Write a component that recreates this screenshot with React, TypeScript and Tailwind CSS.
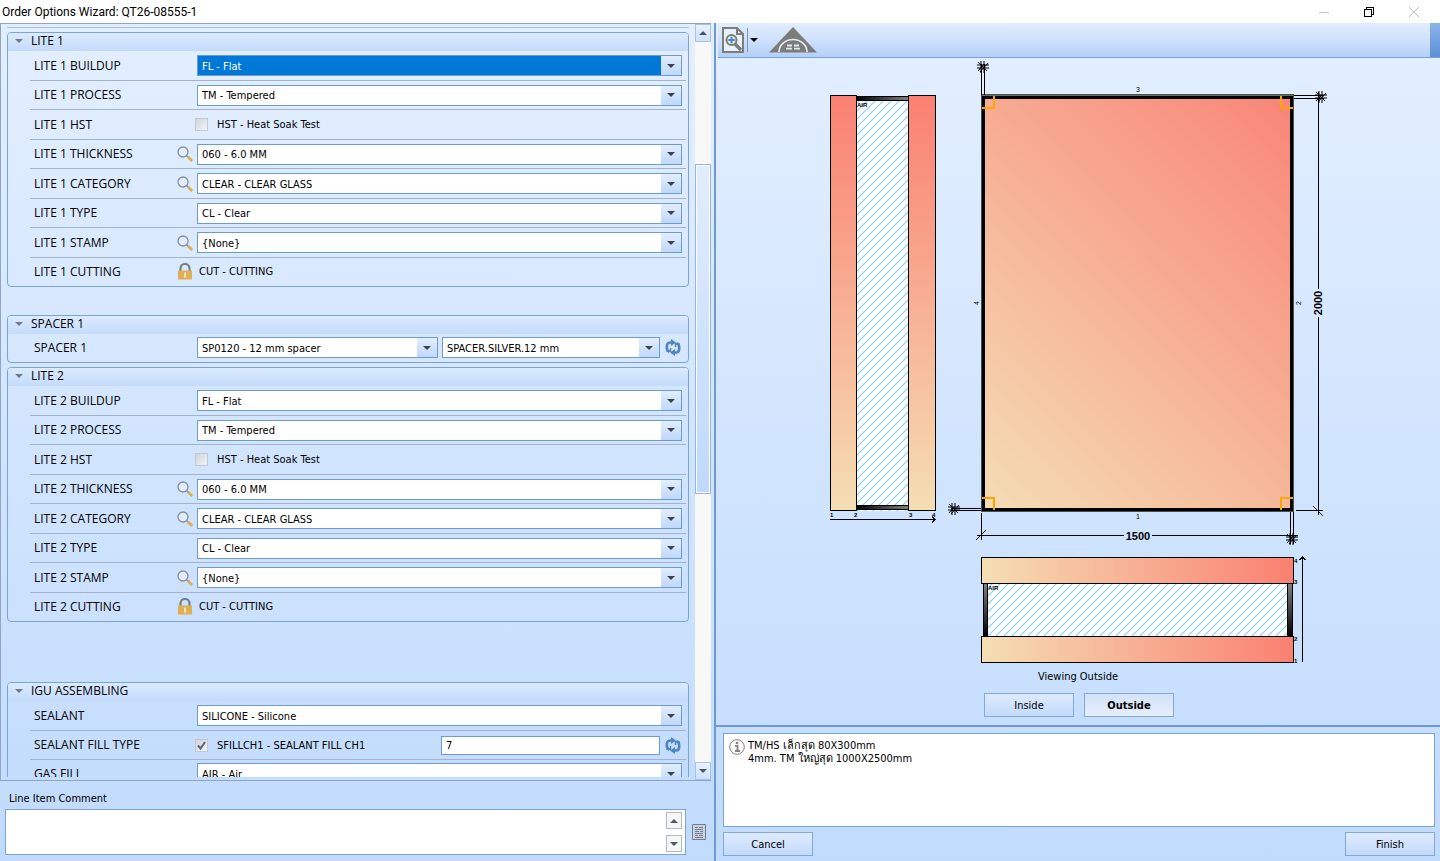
import { useState } from "react";
import type { ReactNode } from "react";

type RowKind = "select" | "check" | "locked";

interface OptionRow {
  id: string;
  label: string;
  value: string;
  kind: RowKind;
  search?: boolean;
  focused?: boolean;
  checked?: boolean;
  extra?: "select" | "input";
  extraValue?: string;
}

interface OptionGroup {
  title: string;
  gap: string;
  rows: OptionRow[];
}

function liteRows(n: number): OptionRow[] {
  return [
    { id: `lite${n}-buildup`, label: `LITE ${n} BUILDUP`, value: "FL - Flat", kind: "select", focused: n === 1 },
    { id: `lite${n}-process`, label: `LITE ${n} PROCESS`, value: "TM - Tempered", kind: "select" },
    { id: `lite${n}-hst`, label: `LITE ${n} HST`, value: "HST - Heat Soak Test", kind: "check" },
    { id: `lite${n}-thickness`, label: `LITE ${n} THICKNESS`, value: "060 - 6.0 MM", kind: "select", search: true },
    { id: `lite${n}-category`, label: `LITE ${n} CATEGORY`, value: "CLEAR - CLEAR GLASS", kind: "select", search: true },
    { id: `lite${n}-type`, label: `LITE ${n} TYPE`, value: "CL - Clear", kind: "select" },
    { id: `lite${n}-stamp`, label: `LITE ${n} STAMP`, value: "{None}", kind: "select", search: true },
    { id: `lite${n}-cutting`, label: `LITE ${n} CUTTING`, value: "CUT - CUTTING", kind: "locked" },
  ];
}

const groups: OptionGroup[] = [
  { title: "LITE 1", gap: "mt-1", rows: liteRows(1) },
  {
    title: "SPACER 1",
    gap: "mt-7",
    rows: [
      {
        id: "spacer1",
        label: "SPACER 1",
        value: "SP0120 - 12 mm spacer",
        kind: "select",
        extra: "select",
        extraValue: "SPACER.SILVER.12 mm",
      },
    ],
  },
  { title: "LITE 2", gap: "mt-1", rows: liteRows(2) },
  {
    title: "IGU ASSEMBLING",
    gap: "mt-15",
    rows: [
      { id: "sealant", label: "SEALANT", value: "SILICONE - Silicone", kind: "select" },
      {
        id: "sealant-fill",
        label: "SEALANT FILL TYPE",
        value: "SFILLCH1 - SEALANT FILL CH1",
        kind: "check",
        checked: true,
        extra: "input",
        extraValue: "7",
      },
      { id: "gas-fill", label: "GAS FILL", value: "AIR - Air", kind: "select" },
    ],
  },
];

function Triangle({ up = false, className }: { up?: boolean; className?: string }) {
  return (
    <svg width="8" height="4" viewBox="0 0 8 4" className={className} fill="currentColor" aria-hidden="true">
      <path d={up ? "M0 4h8L4 0z" : "M0 0h8L4 4z"} />
    </svg>
  );
}

function SearchIcon() {
  return (
    <svg width="16" height="16" viewBox="0 0 16 16" fill="none" aria-hidden="true">
      <circle cx="6" cy="6" r="5" fill="#e4edfb" stroke="#8490a2" strokeWidth="1.3" />
      <path d="M9.5 9.5l2 2" stroke="#8490a2" strokeWidth="1.4" />
      <path d="M11 11l4.2 4" stroke="#dfae52" strokeWidth="2.8" />
    </svg>
  );
}

function LockIcon() {
  return (
    <svg width="16" height="17" viewBox="0 0 16 17" aria-hidden="true">
      <path d="M3.5 8V5.5a4.5 4.5 0 0 1 9 0V8" fill="none" stroke="#75808a" strokeWidth="2.2" />
      <rect x="1" y="7.5" width="14" height="9" fill="#e0b056" />
      <path d="M7.3 9.5h1.7v5H7.3z" fill="#fbf0d4" />
    </svg>
  );
}

function RefreshIcon() {
  return (
    <svg width="16" height="17" viewBox="0 0 16 17" fill="none" stroke="#4f84c0" strokeWidth="2.6" aria-hidden="true">
      <path d="M7 3.5H5.2C3 3.5 1.8 5 1.8 7.5v1.3c0 1.9.8 3.3 2.700 3.900" />
      <path d="M9 13.5h1.800c2.200 0 3.400-1.500 3.400-4V8.200c0-1.900-.8-3.300-2.700-3.900" />
      <path d="M6 0l5 3.500L6 7zM10 10l-5 3.500 5 3.500z" fill="#4f84c0" stroke="none" />
      <path d="M1.500 12.200h4V9M14.500 4.800h-4V8" strokeWidth="1.500" />
    </svg>
  );
}

function Combo({ id, label, value, focused }: { id: string; label?: string; value: string; focused?: boolean }) {
  return (
    <div className="relative h-[21px] min-w-0 flex-1 border border-[#6d9bd1] bg-white">
      <select
        id={id}
        aria-label={label}
        defaultValue={value}
        className={
          focused
            ? "block h-full w-full appearance-none bg-[#0078d7] pl-1 pt-px text-white outline-none"
            : "block h-full w-full appearance-none bg-white pl-1 pt-px outline-none"
        }
      >
        <option>{value}</option>
      </select>
      <span className="pointer-events-none absolute inset-y-0 right-0 flex w-5 items-center justify-center bg-linear-to-b from-[#e3eefe] to-[#bfd8fa] text-[#3b444e]">
        <Triangle />
      </span>
    </div>
  );
}

function Check({ id, label, checked }: { id: string; label: string; checked?: boolean }) {
  const [on, setOn] = useState(Boolean(checked));
  return (
    <div className="flex flex-1 items-center">
      <span className="relative -ml-0.5 mr-[9px] size-[13px]">
        <input
          id={id}
          type="checkbox"
          checked={on}
          onChange={(e) => setOn(e.target.checked)}
          className="block size-full appearance-none border border-[#c3c9d2] bg-linear-to-br from-[#ced4dc] to-[#f4f5f7]"
        />
        {on && (
          <svg viewBox="0 0 13 13" className="pointer-events-none absolute inset-0" fill="none" stroke="#5d6572" strokeWidth="2" aria-hidden="true">
            <path d="M3 6.5l2.5 3L10 3" />
          </svg>
        )}
      </span>
      <label htmlFor={id}>{label}</label>
    </div>
  );
}

function Row({ row }: { row: OptionRow }) {
  return (
    <div className="ml-[22px] mr-0.5 flex items-center border-b border-[#a3b3cb] px-1 not-last:odd:h-[30px] not-last:even:h-[29px] last:h-7 last:border-b-transparent">
      <label htmlFor={row.id} className="w-[143px] shrink-0 font-['Open_Sans','Noto_Sans',sans-serif] text-[12px] leading-4">
        {row.label}
      </label>
      <span className="flex w-5 shrink-0">
        {row.search && <SearchIcon />}
        {row.kind === "locked" && <LockIcon />}
      </span>
      {row.kind === "locked" && (
        <output id={row.id} className="pl-0.5">
          {row.value}
        </output>
      )}
      {row.kind === "check" && <Check id={row.id} label={row.value} checked={row.checked} />}
      {row.kind === "select" && <Combo id={row.id} value={row.value} focused={row.focused} />}
      {row.extra && (
        <div className="ml-1 mr-px flex flex-1 items-center gap-[5px]">
          {row.extra === "select" ? (
            <Combo id={`${row.id}-extra`} label={`${row.label} item`} value={row.extraValue ?? ""} />
          ) : (
            <input
              aria-label={`${row.label} quantity`}
              defaultValue={row.extraValue}
              className="h-[19px] min-w-0 flex-1 border border-[#6d9bd1] bg-white px-1 outline-none"
            />
          )}
          <button type="button" aria-label="Refresh">
            <RefreshIcon />
          </button>
        </div>
      )}
    </div>
  );
}

function Group({ group }: { group: OptionGroup }) {
  return (
    <section className={`${group.gap} rounded-[4px] border border-[#7ba3d8]`}>
      <h2 className="flex h-[18px] items-center rounded-t-[3px] bg-linear-to-b from-[#dcebff] to-[#c3dbfb] pb-0.5 pl-[7px] font-['Open_Sans','Noto_Sans',sans-serif] text-[12px] leading-4">
        <Triangle className="mr-2 text-[#6f7b88]" />
        {group.title}
      </h2>
      <div>
        {group.rows.map((row) => (
          <Row key={row.id} row={row} />
        ))}
      </div>
    </section>
  );
}

function PushButton({ children, active }: { children: ReactNode; active?: boolean }) {
  return (
    <button
      type="button"
      className={
        active
          ? "h-6 w-[90px] border border-[#85a7dc] bg-linear-to-b from-[#d3e2f8] to-[#e6effb] font-bold"
          : "h-6 w-[90px] border border-[#85a7dc] bg-linear-to-b from-[#dfebfe] to-[#c3dafb]"
      }
    >
      {children}
    </button>
  );
}

function ScrollBar() {
  return (
    <div className="flex w-4 flex-col bg-[#f8f9f6]">
      <button type="button" aria-label="Scroll up" className="flex h-[18px] items-center justify-center border border-[#a5c2ea] bg-linear-to-b from-[#eaf2fe] to-[#cfe1fb] text-[#46566e]">
        <Triangle up />
      </button>
      <div className="flex-[123]" />
      <div className="flex-[329] border border-[#94b5e2] bg-linear-to-b from-[#e1edfe] to-[#bfd9fc] ring-1 ring-white ring-inset" />
      <div className="flex-[269]" />
      <button type="button" aria-label="Scroll down" className="flex h-[18px] items-center justify-center border border-[#a5c2ea] bg-linear-to-b from-[#eaf2fe] to-[#cfe1fb] text-[#46566e]">
        <Triangle />
      </button>
    </div>
  );
}

function CornerMark({ x, y, dx, dy }: { x: number; y: number; dx: number; dy: number }) {
  return <path d={`M${x} ${y + 12 * dy}h${12 * dx}v${-12 * dy}`} fill="none" stroke="#ffa500" strokeWidth="2" />;
}

// dimension arrow tangle where two very short dimensions overlap
function Burst({ x, y }: { x: number; y: number }) {
  return (
    <path
      transform={`translate(${x} ${y})`}
      d="M-6 -2h12M-6 1h12M-2 -6v12M1 -6v12M-5 -5l9 9M-3 5l8 -9M-5 4l6 -7"
      stroke="#000"
      fill="none"
    />
  );
}

function GlassDrawing() {
  return (
    <svg
      viewBox="718 58 722 606"
      preserveAspectRatio="xMidYMin meet"
      className="min-h-0 w-full flex-1 font-['Liberation_Sans',Arial,sans-serif]"
      role="img"
      aria-label="Glass unit drawing"
    >
      <defs>
        <linearGradient id="pane" gradientUnits="userSpaceOnUse" x1="962" y1="479" x2="1330" y2="111">
          <stop offset="0" stopColor="#f4dcb4" />
          <stop offset="1" stopColor="#f98276" />
        </linearGradient>
        <linearGradient id="down" x1="0" y1="0" x2="0" y2="1">
          <stop offset="0" stopColor="#fa8072" />
          <stop offset="1" stopColor="#f5deb3" />
        </linearGradient>
        <linearGradient id="across" x1="0" y1="0" x2="1" y2="0">
          <stop offset="0" stopColor="#f5deb3" />
          <stop offset="1" stopColor="#fa8072" />
        </linearGradient>
        <linearGradient id="barH" x1="0" y1="0" x2="1" y2="0">
          <stop offset="0" stopColor="#000" />
          <stop offset="1" stopColor="#808080" />
        </linearGradient>
        <linearGradient id="barV" x1="0" y1="1" x2="0" y2="0">
          <stop offset="0" stopColor="#000" />
          <stop offset="1" stopColor="#808080" />
        </linearGradient>
        <pattern id="hatch" width="8" height="8" patternUnits="userSpaceOnUse">
          <rect width="8" height="8" fill="#fff" />
          <path d="M-1 9L9 -1M-1 1L1 -1M7 9L9 7" stroke="#87cefa" strokeWidth="1.2" />
        </pattern>
      </defs>

      {/* side section */}
      <g stroke="#000" shapeRendering="crispEdges">
        <rect x="856.5" y="95.5" width="52" height="415" fill="url(#hatch)" stroke="none" />
        <rect x="856.5" y="96.5" width="52" height="4" fill="url(#barH)" />
        <rect x="856.5" y="505.5" width="52" height="4" fill="url(#barH)" />
        <path d="M856.5 96v414M908.5 96v414" />
        <rect x="830.5" y="95.5" width="26" height="415" fill="url(#down)" />
        <rect x="908.5" y="95.5" width="27" height="415" fill="url(#down)" />
        <path d="M830 519.5h106M932 516.5l3 3l-3 3" fill="none" />
      </g>

      {/* front view */}
      <g shapeRendering="crispEdges">
        <rect x="983.5" y="97.5" width="308" height="412" fill="url(#pane)" stroke="#000" strokeWidth="3" />
        <rect x="981.5" y="94.5" width="312" height="417" fill="none" stroke="#4b504c" />
        <path d="M982 95.5h311" stroke="#6c706c" />
        <CornerMark x={982} y={96} dx={1} dy={1} />
        <CornerMark x={1293} y={96} dx={-1} dy={1} />
        <CornerMark x={982} y={510} dx={1} dy={-1} />
        <CornerMark x={1293} y={510} dx={-1} dy={-1} />
      </g>

      {/* dimension lines */}
      <g stroke="#000" fill="none" shapeRendering="crispEdges">
        <path d="M981.5 64v31M984.5 64v31" />
        <path d="M1294 95.5h30M1294 98.5h30" />
        <path d="M951 508.5h30M951 510.5h30" />
        <path d="M1318.5 92v197M1318.5 317v198M1296 510.5h27M1313 506l10 10" />
        <path d="M981.5 513v27M977 535.5h147M1152 535.5h146M976 540l10 -10" />
        <path d="M1290.5 512v32M1293.5 512v32" />
      </g>
      <Burst x={983} y={67} />
      <Burst x={1321} y={97} />
      <Burst x={954} y={509} />
      <Burst x={1292} y={539} />

      {/* bottom section */}
      <g stroke="#000" shapeRendering="crispEdges">
        <rect x="984" y="583.5" width="308" height="53" fill="url(#hatch)" stroke="none" />
        <rect x="983.5" y="583.5" width="4" height="53" fill="url(#barV)" />
        <rect x="1287.5" y="583.5" width="5" height="53" fill="url(#barV)" />
        <rect x="981.5" y="557.5" width="312" height="26" fill="url(#across)" />
        <rect x="981.5" y="636.5" width="312" height="26" fill="url(#across)" />
        <path d="M1302.5 662v-104M1299.5 560l3 -3l3 3" fill="none" />
      </g>

      <g fontSize="11" fontWeight="bold" textAnchor="middle">
        <text x="1138" y="540">1500</text>
        <text transform="translate(1322 303) rotate(-90)">2000</text>
      </g>
      <g fontSize="7" textAnchor="middle">
        <text x="1138" y="92">3</text>
        <text x="1138" y="519">1</text>
        <text transform="translate(979 303) rotate(-90)">4</text>
        <text transform="translate(1301 303) rotate(-90)">2</text>
      </g>
      <g fontSize="6" fontWeight="bold">
        <text x="857" y="107">AIR</text>
        <text x="988" y="590">AIR</text>
        <text x="830" y="517">1</text>
        <text x="854" y="517">2</text>
        <text x="909" y="517">3</text>
        <text x="932" y="517">4</text>
        <text x="1294" y="563">4</text>
        <text x="1294" y="584">3</text>
        <text x="1294" y="641">2</text>
        <text x="1294" y="663">1</text>
      </g>
    </svg>
  );
}

function TitleBar() {
  return (
    <header className="flex h-[23px] shrink-0 items-center justify-between bg-white pl-0.5 pr-[21px]">
      <h1 className="font-[Roboto,sans-serif] text-[12px] leading-4">Order Options Wizard: QT26-08555-1</h1>
      <div className="flex gap-[35px]">
        <button type="button" aria-label="Minimize">
          <svg width="10" height="10" viewBox="0 0 10 10" stroke="#c4c4c4" shapeRendering="crispEdges">
            <path d="M0 5.5h10" />
          </svg>
        </button>
        <button type="button" aria-label="Restore">
          <svg width="10" height="10" viewBox="0 0 10 10" fill="none" stroke="#000" shapeRendering="crispEdges">
            <path d="M.5 2.5h7v7h-7zM2.5 2.5v-2h7v7h-2" />
          </svg>
        </button>
        <button type="button" aria-label="Close">
          <svg width="10" height="10" viewBox="0 0 10 10" stroke="#c4c4c4">
            <path d="M0 0l10 10M10 0L0 10" />
          </svg>
        </button>
      </div>
    </header>
  );
}

function Toolbar() {
  return (
    <div className="flex h-[35px] shrink-0 items-center border-b border-[#7ba0dc] bg-linear-to-b from-[#e1edff] via-[#cfe1fd] to-[#b3d0fb]">
      <button type="button" aria-label="Zoom drawing" className="ml-1">
        <svg width="22" height="26" viewBox="0 0 22 26" fill="none" stroke="#7d7d7a" strokeWidth="2" aria-hidden="true">
          <path d="M1 1h14l6 6v18H1z" fill="#e9f1fb" />
          <path d="M15 1v6h6" />
          <path d="M13 17l6 6" strokeWidth="3.5" />
          <circle cx="9.5" cy="13" r="5" fill="#e4effc" />
          <path d="M9.5 9.8v6.4M6.3 13h6.4" stroke="#4b86c6" />
        </svg>
      </button>
      <button type="button" aria-label="Zoom options" className="ml-[3px] flex h-6 items-center border-l border-[#8795ab] pl-0.5">
        <Triangle />
      </button>
      <button type="button" aria-label="Shape" className="ml-[10px]">
        <svg width="50" height="26" viewBox="0 0 50 26" aria-hidden="true">
          <path d="M25 0L49 25.5H1z" fill="#7c7c78" />
          <path d="M11 25a14 12.5 0 0 1 28 0" fill="none" stroke="#e3edfb" strokeWidth="1.6" />
          <path d="M19 17.5h5v2h-5zM26 17.5h5v2h-5zM18 20.7h6v1.8h-6zM26 20.7h6v1.8h-6z" fill="#dfe9f7" />
        </svg>
      </button>
      <span className="ml-auto h-full w-[10px] bg-linear-to-b from-[#8db4ec] to-[#5c8fd8]" />
    </div>
  );
}

export default function App() {
  return (
    <div className="flex h-screen flex-col overflow-hidden bg-white font-['DejaVu_Sans_Condensed','Noto_Sans',sans-serif] text-[11px] leading-[13px] text-black">
      <TitleBar />
      <div className="flex min-h-0 flex-1 bg-linear-to-b from-[#e3efff] to-[#c1dbfd]">
        <div className="flex min-w-0 flex-[715] flex-col">
          <div className="mr-[3px] flex min-h-0 flex-1 border-y border-l border-[#8fa5c8]">
            <div className="mb-[3px] min-h-0 min-w-0 flex-1 overflow-hidden px-1.5">
              <div className="mt-[3px] border-t border-[#a9c2e6]" />
              {groups.map((group) => (
                <Group key={group.title} group={group} />
              ))}
            </div>
            <ScrollBar />
          </div>
          <div className="flex shrink-0 flex-col pb-1.5 pl-[5px] pr-2 pt-2.5">
            <label htmlFor="comment" className="pl-1 leading-4">
              Line Item Comment
            </label>
            <div className="mt-0.5 flex items-center">
              <div className="flex h-[46px] flex-1 border border-[#7ba3d8] bg-white">
                <textarea id="comment" className="h-full flex-1 resize-none p-1 outline-none" />
                <div className="flex flex-col justify-between py-0.5 pr-[3px]">
                  <button type="button" aria-label="Scroll comment up" className="flex h-[17px] w-4 items-center justify-center border border-[#b5b9be] bg-[#f5f6f7] text-[#4d5a66]">
                    <Triangle up />
                  </button>
                  <button type="button" aria-label="Scroll comment down" className="flex h-[17px] w-4 items-center justify-center border border-[#b5b9be] bg-[#f5f6f7] text-[#4d5a66]">
                    <Triangle />
                  </button>
                </div>
              </div>
              <button type="button" aria-label="Open comment" className="ml-1.5">
                <svg width="14" height="16" viewBox="0 0 14 16" fill="none" stroke="#747e90" aria-hidden="true">
                  <path d="M.5.5h13v15H.5z" fill="#c9d2e2" />
                  <path d="M3 3.5h3M7 3.5h4M3 5.5h8M3 7.5h4M8 7.5h3M3 9.5h8M3 11.5h3M7 11.5h4M3 13.5h8" />
                </svg>
              </button>
            </div>
          </div>
        </div>
        <div className="flex min-w-0 flex-[725] flex-col border-l-2 border-[#7099d3]">
          <div className="flex min-h-0 flex-1 flex-col items-stretch border-b-2 border-[#7099d3] pl-0.5">
            <Toolbar />
            <GlassDrawing />
            <p className="mt-0.5 pr-0.5 text-center leading-4">Viewing Outside</p>
            <div className="mb-2 mt-2 flex justify-center gap-[10px]">
              <PushButton>Inside</PushButton>
              <PushButton active>Outside</PushButton>
            </div>
          </div>
          <div className="flex shrink-0 flex-col gap-[5px] pb-[5px] pl-[7px] pr-[5px] pt-1.5">
            <div className="flex h-[94px] gap-[3px] border border-[#7ba3d8] bg-white pl-[5px] pt-[5px]">
              <svg width="16" height="16" viewBox="0 0 16 16" fill="none" stroke="#808080" aria-hidden="true">
                <circle cx="8" cy="8" r="7.3" />
                <path d="M6 6.8h2.5v5M6 12h5" strokeWidth="1.8" />
                <circle cx="8" cy="4" r="1.3" fill="#808080" stroke="none" />
              </svg>
              <p className="whitespace-pre">{"TM/HS เล็กสุด 80X300mm\n4mm. TM ใหญ่สุด 1000X2500mm"}</p>
            </div>
            <div className="flex justify-between">
              <PushButton>Cancel</PushButton>
              <PushButton>Finish</PushButton>
            </div>
          </div>
        </div>
      </div>
    </div>
  );
}
